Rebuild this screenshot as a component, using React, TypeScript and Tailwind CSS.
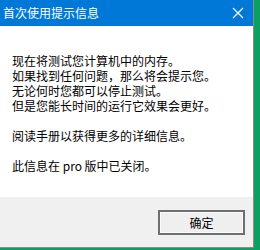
import React from 'react';

const font = "font-['Noto_Sans_CJK_SC','Noto_Sans',sans-serif]";

const lines = [
  '现在将测试您计算机中的内存。',
  '如果找到任何问题，那么将会提示您。',
  '无论何时您都可以停止测试。',
  '但是您能长时间的运行它效果会更好。',
];

const App = () => {
  return (
    <div className={`w-[260px] h-[250px] bg-[#0b9f62] overflow-hidden ${font}`}>
      <div className="w-[254px] h-[248px] flex flex-col border-r border-b border-[#8c8c8c]">
        {/* Title bar */}
        <div className="h-[26px] bg-[#0078d7] flex items-center justify-between pl-[3px] pr-[8px] text-white text-[12px]">
          <span className="leading-none">首次使用提示信息</span>
          <svg width="12" height="12" viewBox="0 0 12 12" className="mr-[1px]">
            <path d="M1 1 L11 11 M11 1 L1 11" stroke="#fff" strokeWidth="1.2" />
          </svg>
        </div>

        {/* Message */}
        <div className="h-[171px] bg-white pt-[27px] pl-[12px] text-[12px] leading-[15px] text-black">
          {lines.map((l) => (
            <div key={l}>{l}</div>
          ))}
          <div className="mt-[15px]">阅读手册以获得更多的详细信息。</div>
          <div className="mt-[15px]">此信息在 pro 版中已关闭。</div>
        </div>

        {/* Footer */}
        <div className="flex-1 bg-[#f0f0f0] flex justify-end items-start pt-[13px] pr-[8px]">
          <button className="w-[87px] h-[25px] border-2 border-[#6f6f6f] bg-[#efefef] shadow-[inset_0_0_0_1px_#fbfbfb] text-[12px] text-black leading-none">
            确定
          </button>
        </div>
      </div>
    </div>
  );
};

export default App;
